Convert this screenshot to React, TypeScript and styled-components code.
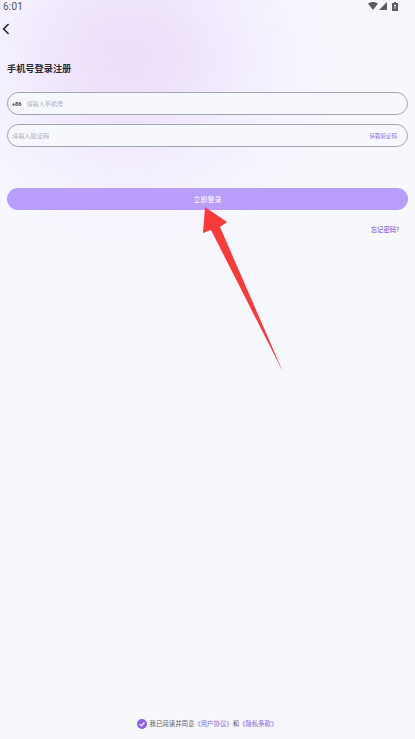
import styled, { createGlobalStyle } from "styled-components";

const FONT = `"Noto Sans CJK SC", Roboto, "Noto Sans", sans-serif`;

const GlobalStyle = createGlobalStyle`
  html, body {
    margin: 0;
    padding: 0;
    background: #f8f8fe;
  }
  * {
    box-sizing: border-box;
  }
`;

export default function App() {
  return (
    <Page>
      <GlobalStyle />
      <StatusBar>
        <Time>6:01</Time>
        <StatusIcons>
          <svg width="10" height="8" viewBox="0 0 10 8">
            <path d="M0 1.6C3-.5 7-.5 10 1.6L5 8z" fill="#5d5d63" />
          </svg>
          <SignalIcon width="8" height="8" viewBox="0 0 8 8">
            <path d="M8 0v8H0z" fill="#5d5d63" />
          </SignalIcon>
          <BatteryIcon width="6" height="9" viewBox="0 0 6 9">
            <path d="M2 0h2v1h2v8H0V1h2z" fill="#5d5d63" />
            <path d="M3 2.2 1.8 4h.8v2.8h.8V4h.8z" fill="#f8f8fe" />
          </BatteryIcon>
        </StatusIcons>
      </StatusBar>

      <BackRow>
        <svg width="8" height="12" viewBox="0 0 8 12">
          <path d="M6.6 1 1.6 6l5 5" fill="none" stroke="#26262c" strokeWidth="1.6" />
        </svg>
      </BackRow>

      <Title>手机号登录注册</Title>

      <Form>
        <Field>
          <Prefix>+86</Prefix>
          <Placeholder>请输入手机号</Placeholder>
        </Field>
        <Field>
          <Placeholder>请输入验证码</Placeholder>
          <CodeLink>获取验证码</CodeLink>
        </Field>
      </Form>

      <Submit>立即登录</Submit>
      <Forgot>忘记密码?</Forgot>

      <Agreement>
        <svg width="10" height="10" viewBox="0 0 10 10">
          <circle cx="5" cy="5" r="5" fill="#8e62e6" />
          <path d="M2.6 5.1 4.4 6.8 7.5 3.5" fill="none" stroke="#fff" strokeWidth="1.1" />
        </svg>
        <AgreementText>
          我已阅读并同意<AgreementLink>《用户协议》</AgreementLink>和<AgreementLink>《隐私条款》</AgreementLink>
        </AgreementText>
      </Agreement>

      <Arrow width="415" height="739" viewBox="0 0 415 739">
        <path d="M205 207 227 222 220 227 283 372 211 230 203 233z" fill="#fb3a3c" />
      </Arrow>
    </Page>
  );
}

const Page = styled.div`
  position: relative;
  display: flex;
  flex-direction: column;
  width: 415px;
  height: 739px;
  overflow: hidden;
  font-family: ${FONT};
  background:
    radial-gradient(ellipse 120px 100px at 130px 55px, rgba(233, 216, 250, 0.5) 0%, rgba(233, 216, 250, 0) 100%),
    radial-gradient(ellipse 210px 195px at 130px 60px, rgba(238, 226, 251, 0.95) 0%, rgba(240, 230, 252, 0.6) 50%, rgba(244, 240, 253, 0) 100%),
    #f7f8fe;
`;

const StatusBar = styled.div`
  display: flex;
  align-items: center;
  justify-content: space-between;
  height: 12px;
  padding: 0 17px 0 3px;
`;

const Time = styled.span`
  font-family: Roboto, sans-serif;
  font-size: 10px;
  letter-spacing: 0.2px;
  color: #55555b;
`;

const StatusIcons = styled.div`
  display: flex;
  align-items: center;
`;

const SignalIcon = styled.svg`
  margin-left: 1px;
`;

const BatteryIcon = styled.svg`
  margin-left: 5px;
`;

const BackRow = styled.div`
  display: flex;
  height: 12px;
  margin-top: 11px;
  padding-left: 2px;
`;

const Title = styled.h1`
  margin: 26px 0 0 7px;
  font-size: 9.2px;
  line-height: 14px;
  font-weight: 700;
  color: #2a2a30;
`;

const Form = styled.div`
  display: flex;
  flex-direction: column;
  gap: 9px;
  margin: 17px 7px 0;
`;

const Field = styled.div`
  display: flex;
  align-items: center;
  gap: 5px;
  height: 23px;
  padding: 0 10px 0 4px;
  background: #f6f8fe;
  border: 1px solid #a3a3ad;
  border-radius: 12px;
`;

const Prefix = styled.span`
  font-family: Roboto, sans-serif;
  font-size: 5.5px;
  font-weight: 700;
  color: #3a3a42;
`;

const Placeholder = styled.span`
  flex: 1;
  font-size: 6.2px;
  color: #aeaeb6;
`;

const CodeLink = styled.span`
  font-size: 5.5px;
  color: #8a68de;
`;

const Submit = styled.button`
  display: block;
  height: 22px;
  margin: 41px 7px 0;
  padding: 0;
  border: none;
  border-radius: 11px;
  background: #b99dfb;
  color: #fff;
  font-family: ${FONT};
  font-size: 7px;
`;

const Forgot = styled.a`
  align-self: flex-end;
  margin: 15px 16px 0 0;
  font-size: 6.3px;
  line-height: 10px;
  color: #6d3fd0;
`;

const Agreement = styled.div`
  display: flex;
  align-items: center;
  justify-content: center;
  gap: 3px;
  margin-top: auto;
  padding-bottom: 10px;
  padding-right: 1px;
`;

const AgreementText = styled.span`
  font-size: 6.4px;
  line-height: 10px;
  color: #55555d;
`;

const AgreementLink = styled.span`
  color: #8a68de;
`;

const Arrow = styled.svg`
  position: absolute;
  top: 0;
  left: 0;
  pointer-events: none;
`;
